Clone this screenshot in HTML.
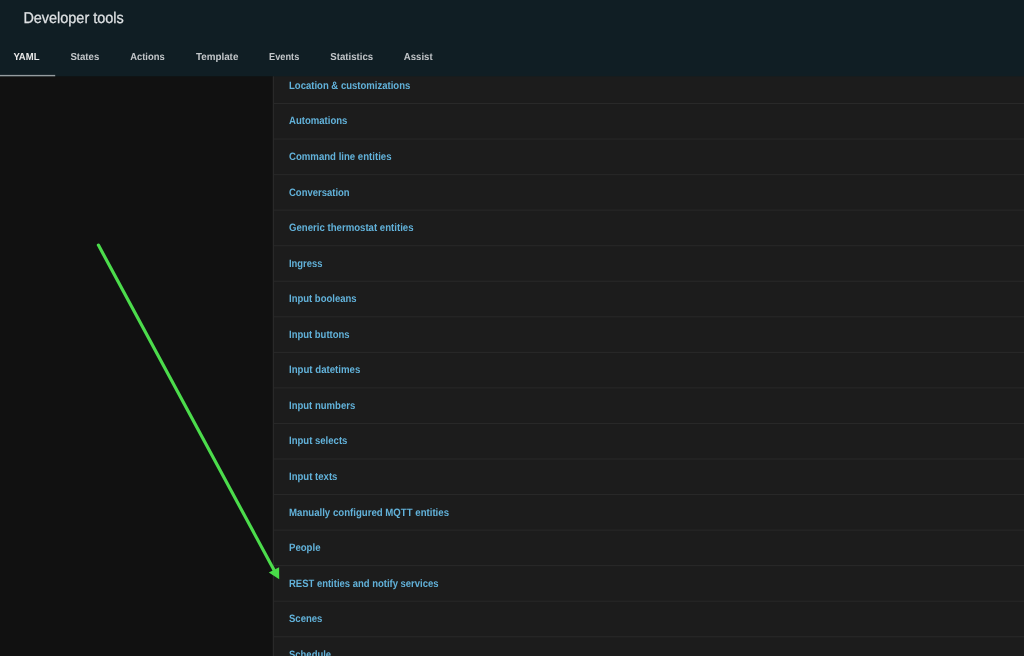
<!DOCTYPE html><html><head><meta charset="utf-8"><style>html,body{margin:0;padding:0;width:1024px;height:656px;overflow:hidden;background:#111111}svg{display:block;will-change:transform}text{font-family:"Liberation Sans",sans-serif;text-rendering:geometricPrecision}</style></head><body>
<svg width="1024" height="656" viewBox="0 0 1024 656">
<rect x="272.5" y="0" width="760" height="656" fill="#1c1c1c"/>
<rect x="273" y="0" width="1" height="656" fill="#292929"/>
<rect x="274" y="103.00" width="760" height="1" fill="#292929"/>
<rect x="274" y="138.55" width="760" height="1" fill="#292929"/>
<rect x="274" y="174.10" width="760" height="1" fill="#292929"/>
<rect x="274" y="209.65" width="760" height="1" fill="#292929"/>
<rect x="274" y="245.20" width="760" height="1" fill="#292929"/>
<rect x="274" y="280.75" width="760" height="1" fill="#292929"/>
<rect x="274" y="316.30" width="760" height="1" fill="#292929"/>
<rect x="274" y="351.85" width="760" height="1" fill="#292929"/>
<rect x="274" y="387.40" width="760" height="1" fill="#292929"/>
<rect x="274" y="422.95" width="760" height="1" fill="#292929"/>
<rect x="274" y="458.50" width="760" height="1" fill="#292929"/>
<rect x="274" y="494.05" width="760" height="1" fill="#292929"/>
<rect x="274" y="529.60" width="760" height="1" fill="#292929"/>
<rect x="274" y="565.15" width="760" height="1" fill="#292929"/>
<rect x="274" y="600.70" width="760" height="1" fill="#292929"/>
<rect x="274" y="636.25" width="760" height="1" fill="#292929"/>
<rect x="274" y="671.80" width="760" height="1" fill="#292929"/>
<text x="289.00" y="88.90" font-size="10.70" font-weight="bold" fill="#62b2da" textLength="121.30" lengthAdjust="spacingAndGlyphs">Location &amp; customizations</text>
<text x="289.00" y="124.45" font-size="10.70" font-weight="bold" fill="#62b2da" textLength="58.40" lengthAdjust="spacingAndGlyphs">Automations</text>
<text x="289.00" y="160.00" font-size="10.70" font-weight="bold" fill="#62b2da" textLength="102.50" lengthAdjust="spacingAndGlyphs">Command line entities</text>
<text x="289.00" y="195.55" font-size="10.70" font-weight="bold" fill="#62b2da" textLength="60.60" lengthAdjust="spacingAndGlyphs">Conversation</text>
<text x="289.00" y="231.10" font-size="10.70" font-weight="bold" fill="#62b2da" textLength="124.50" lengthAdjust="spacingAndGlyphs">Generic thermostat entities</text>
<text x="289.00" y="266.65" font-size="10.70" font-weight="bold" fill="#62b2da" textLength="33.50" lengthAdjust="spacingAndGlyphs">Ingress</text>
<text x="289.00" y="302.20" font-size="10.70" font-weight="bold" fill="#62b2da" textLength="67.60" lengthAdjust="spacingAndGlyphs">Input booleans</text>
<text x="289.00" y="337.75" font-size="10.70" font-weight="bold" fill="#62b2da" textLength="60.60" lengthAdjust="spacingAndGlyphs">Input buttons</text>
<text x="289.00" y="373.30" font-size="10.70" font-weight="bold" fill="#62b2da" textLength="71.30" lengthAdjust="spacingAndGlyphs">Input datetimes</text>
<text x="289.00" y="408.85" font-size="10.70" font-weight="bold" fill="#62b2da" textLength="66.20" lengthAdjust="spacingAndGlyphs">Input numbers</text>
<text x="289.00" y="444.40" font-size="10.70" font-weight="bold" fill="#62b2da" textLength="58.40" lengthAdjust="spacingAndGlyphs">Input selects</text>
<text x="289.00" y="479.95" font-size="10.70" font-weight="bold" fill="#62b2da" textLength="48.40" lengthAdjust="spacingAndGlyphs">Input texts</text>
<text x="289.00" y="515.50" font-size="10.70" font-weight="bold" fill="#62b2da" textLength="160.00" lengthAdjust="spacingAndGlyphs">Manually configured MQTT entities</text>
<text x="289.00" y="551.05" font-size="10.70" font-weight="bold" fill="#62b2da" textLength="31.50" lengthAdjust="spacingAndGlyphs">People</text>
<text x="289.00" y="586.60" font-size="10.70" font-weight="bold" fill="#62b2da" textLength="149.50" lengthAdjust="spacingAndGlyphs">REST entities and notify services</text>
<text x="289.00" y="622.15" font-size="10.70" font-weight="bold" fill="#62b2da" textLength="33.40" lengthAdjust="spacingAndGlyphs">Scenes</text>
<text x="289.00" y="657.70" font-size="10.70" font-weight="bold" fill="#62b2da" textLength="42.10" lengthAdjust="spacingAndGlyphs">Schedule</text>
<rect x="0" y="0" width="1024" height="76.3" fill="#101e24"/>
<text x="23.4" y="22.5" font-size="15.5" fill="#dfe2e4" stroke="#dfe2e4" stroke-width="0.25" textLength="100.30" lengthAdjust="spacingAndGlyphs">Developer tools</text>
<text x="13.40" y="60.2" font-size="10.1" font-weight="bold" fill="#e8e8e8" textLength="26.10" lengthAdjust="spacingAndGlyphs">YAML</text>
<text x="70.40" y="60.2" font-size="10.1" font-weight="bold" fill="#c2c6c9" textLength="28.90" lengthAdjust="spacingAndGlyphs">States</text>
<text x="130.20" y="60.2" font-size="10.1" font-weight="bold" fill="#c2c6c9" textLength="34.50" lengthAdjust="spacingAndGlyphs">Actions</text>
<text x="195.90" y="60.2" font-size="10.1" font-weight="bold" fill="#c2c6c9" textLength="42.50" lengthAdjust="spacingAndGlyphs">Template</text>
<text x="269.10" y="60.2" font-size="10.1" font-weight="bold" fill="#c2c6c9" textLength="30.20" lengthAdjust="spacingAndGlyphs">Events</text>
<text x="330.30" y="60.2" font-size="10.1" font-weight="bold" fill="#c2c6c9" textLength="42.80" lengthAdjust="spacingAndGlyphs">Statistics</text>
<text x="403.80" y="60.2" font-size="10.1" font-weight="bold" fill="#c2c6c9" textLength="28.80" lengthAdjust="spacingAndGlyphs">Assist</text>
<rect x="0" y="74.9" width="55.2" height="1.4" fill="#959ca0"/>
<line x1="98.4" y1="245.1" x2="274" y2="570" stroke="#4cdc4c" stroke-width="3.2" stroke-linecap="round"/>
<polygon points="279.2,579.3 268.8,572.4 279.1,567.2" fill="#48dc48"/>
</svg></body></html>
